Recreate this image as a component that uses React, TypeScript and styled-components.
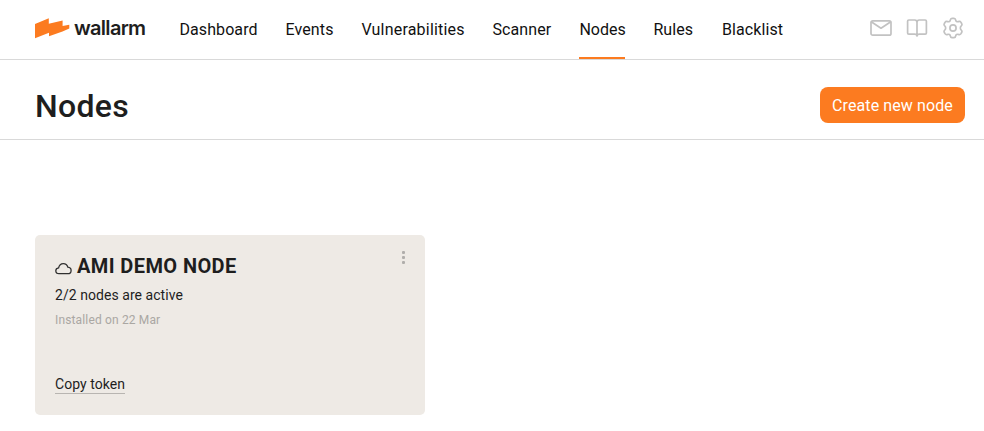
import React from "react";
import styled, { createGlobalStyle } from "styled-components";

const GlobalStyle = createGlobalStyle`
  * { box-sizing: border-box; }
  body { margin: 0; background: #fff; color: #1e1e1e; font-family: Roboto, "Noto Sans", sans-serif; }
  h1, h2, p { margin: 0; }
  a { color: inherit; text-decoration: none; }
`;

const Page = styled.div`
  min-height: 431px;
`;

const Header = styled.header`
  display: flex;
  height: 60px;
  padding: 0 20px 0 35px;
  border-bottom: 1px solid #d9d9d9;
`;

const Brand = styled.a`
  display: flex;
  width: 144.4px;
  flex: none;
`;

const BoltMark = styled.svg`
  width: 35px;
  height: 21px;
  margin-top: 18px;
`;

const BrandName = styled.span`
  margin: 15px 0 0 4px;
  font: 600 20px/26px Inter, sans-serif;
  letter-spacing: -0.7px;
`;

const Nav = styled.nav`
  display: flex;
  gap: 28px;
`;

const NavLink = styled.a<{ $width: number; $tracking: number; $active?: boolean }>`
  width: ${(p) => p.$width}px;
  height: 59px;
  font-size: 16px;
  line-height: 60px;
  white-space: nowrap;
  letter-spacing: ${(p) => p.$tracking}px;
  color: #111;
  border-bottom: 2px solid ${(p) => (p.$active ? "#fc7b20" : "transparent")};
`;

const Tools = styled.div`
  display: flex;
  gap: 14px;
  margin: 17px 0 0 auto;
`;

const ToolIcon = styled.svg`
  width: 22px;
  height: 22px;
  fill: none;
  stroke: #c2c2c2;
  stroke-width: 1.7;
  stroke-linecap: round;
  stroke-linejoin: round;
`;

const TitleBar = styled.section`
  display: flex;
  align-items: center;
  justify-content: space-between;
  height: 80px;
  padding: 0 19px 0 35px;
  border-bottom: 1px solid #d9d9d9;
`;

const Title = styled.h1`
  font-size: 32px;
  font-weight: 500;
  line-height: 40px;
  padding-top: 13px;
  letter-spacing: 0.3px;
`;

const CreateButton = styled.button`
  width: 145px;
  height: 36px;
  margin-top: 11px;
  padding: 1px 0 0;
  border: 0;
  border-radius: 8px;
  background: #fc7b20;
  color: #fff;
  font: 400 16px/35px Roboto, sans-serif;
  letter-spacing: 0.1px;
  white-space: nowrap;
`;

const Card = styled.article`
  display: flex;
  flex-direction: column;
  align-items: flex-start;
  width: 390px;
  height: 180px;
  margin: 95px 0 0 35px;
  padding: 17px 18px 21px 20px;
  border-radius: 5px;
  background: #eeeae5;
`;

const CardHead = styled.div`
  display: flex;
  width: 100%;
  height: 28px;
`;

const CloudIcon = styled.svg`
  width: 17px;
  height: 13px;
  margin: 9.5px 5px 0 0;
  fill: none;
  stroke: #303030;
  stroke-width: 1.3;
`;

const CardTitle = styled.h2`
  font-size: 20px;
  font-weight: 700;
  line-height: 28px;
  letter-spacing: 0.4px;
`;

const MenuDots = styled.div`
  display: grid;
  gap: 2px;
  align-content: start;
  margin: -1px 2px 0 auto;
`;

const Dot = styled.i`
  width: 3px;
  height: 3px;
  border-radius: 1px;
  background: #b0aeab;
`;

const Status = styled.p`
  margin-top: 5px;
  font-size: 14px;
  line-height: 20px;
  letter-spacing: 0.05px;
`;

const Installed = styled.p`
  margin-top: 6px;
  font-size: 12px;
  line-height: 18px;
  letter-spacing: 0.15px;
  color: #aaa7a3;
`;

const CopyToken = styled.a`
  width: 70px;
  height: 19px;
  margin-top: auto;
  border-bottom: 1px solid #b8b5b1;
  font-size: 14px;
  line-height: 18px;
  letter-spacing: 0.05px;
  white-space: nowrap;
`;

const links = [
  { label: "Dashboard", width: 78, tracking: 0.1 },
  { label: "Events", width: 48, tracking: 0.15 },
  { label: "Vulnerabilities", width: 103, tracking: 0.2 },
  { label: "Scanner", width: 59, tracking: 0.1 },
  { label: "Nodes", width: 46, tracking: 0 },
  { label: "Rules", width: 40.5, tracking: 0.1 },
  { label: "Blacklist", width: 62, tracking: 0.1 },
].map((link) => ({ ...link, active: link.label === "Nodes" }));

export default function App() {
  return (
    <Page>
      <GlobalStyle />
      <Header>
        <Brand href="#">
          <BoltMark viewBox="0 0 35 21">
            <path fill="#fc7b20" d="M0 6 13.8.2V5.8L27.6 2.6V8L34.3 6.8V10.4L27.5 13.4 14 18.3V14.7L0 20.3Z" />
          </BoltMark>
          <BrandName>wallarm</BrandName>
        </Brand>
        <Nav>
          {links.map((l) => (
            <NavLink key={l.label} href="#" $width={l.width} $tracking={l.tracking} $active={l.active}>
              {l.label}
            </NavLink>
          ))}
        </Nav>
        <Tools>
          <ToolIcon viewBox="0 0 22 22">
            <rect x="1" y="3.8" width="20" height="14.4" rx="1.8" />
            <path d="m1.6 5 9.4 6.2L20.4 5" />
          </ToolIcon>
          <ToolIcon viewBox="0 0 22 22">
            <path d="M11 5.4C11 3.8 10.2 3 8.8 3H2.8Q1.6 3 1.6 4.2V16Q1.6 17.2 2.8 17.2h5.7c1.5 0 2.5.6 2.5 1.8 0-1.2 1-1.8 2.5-1.8h5.7q1.2 0 1.2-1.2V4.2Q20.4 3 19.2 3h-6C11.8 3 11 3.8 11 5.4V19" />
          </ToolIcon>
          <ToolIcon viewBox="0 0 22 22">
            <circle cx="11" cy="11" r="3.1" />
            <path d="M8.3 3.1C8.5 1.8 9.1 1.3 10 1.3h2c.9 0 1.5.5 1.7 1.8.2 1.3 1.4 2 2.6 1.5 1.3-.5 2-.3 2.5.5l1 1.7c.5.8.3 1.5-.7 2.3-1 .8-1 3 0 3.8 1 .8 1.2 1.5.7 2.3l-1 1.7c-.5.8-1.2 1-2.5.5-1.2-.5-2.4.2-2.6 1.5-.2 1.3-.8 1.8-1.7 1.8h-2c-.9 0-1.5-.5-1.7-1.8-.2-1.3-1.4-2-2.6-1.5-1.3.5-2 .3-2.5-.5l-1-1.7c-.5-.8-.3-1.5.7-2.3 1-.8 1-3 0-3.8-1-.8-1.2-1.5-.7-2.3l1-1.7c.5-.8 1.2-1 2.5-.5 1.2.5 2.4-.2 2.6-1.5Z" />
          </ToolIcon>
        </Tools>
      </Header>
      <TitleBar>
        <Title>Nodes</Title>
        <CreateButton>Create new node</CreateButton>
      </TitleBar>
      <Card>
        <CardHead>
          <CloudIcon viewBox="0 0 17 13">
            <path d="M4 11.7C2 11.7.8 10.4.8 8.8c0-1.7 1.1-2.8 2.8-3C4.2 3.2 5.9 1.6 8.3 1.6c2.3 0 3.9 1.3 4.5 3.5 2 .2 3.3 1.5 3.3 3.3s-1.4 3.3-3.4 3.3Z" />
          </CloudIcon>
          <CardTitle>AMI DEMO NODE</CardTitle>
          <MenuDots>
            <Dot />
            <Dot />
            <Dot />
          </MenuDots>
        </CardHead>
        <Status>2/2 nodes are active</Status>
        <Installed>Installed on 22 Mar</Installed>
        <CopyToken href="#">Copy token</CopyToken>
      </Card>
    </Page>
  );
}
